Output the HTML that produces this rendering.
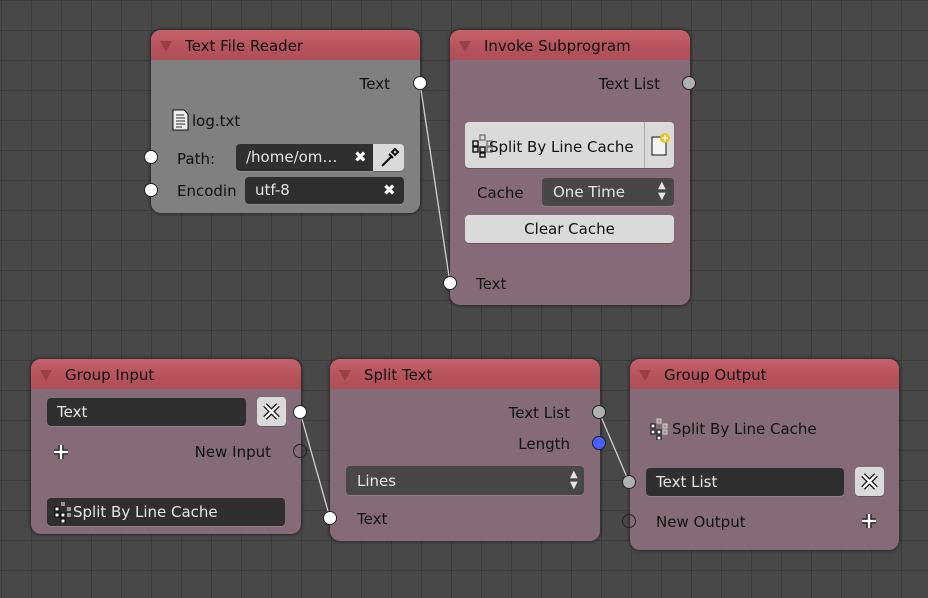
<!DOCTYPE html>
<html><head><meta charset="utf-8"><style>
*{margin:0;padding:0;box-sizing:border-box}
body{width:928px;height:598px;overflow:hidden;position:relative;font-family:"DejaVu Sans","Liberation Sans",sans-serif;font-size:15px;color:#111;
background-color:#484848;
background-image:linear-gradient(to right,#3c3c3c 1px,transparent 1px),linear-gradient(to bottom,#3c3c3c 1px,transparent 1px);
background-size:30px 30px;background-position:1px 0px;}
.node{position:absolute;border-radius:10px;background:#856b77;box-shadow:0 0 3px 1px rgba(0,0,0,.45);}
.hdr{position:absolute;left:0;top:0;right:0;height:30px;border-radius:10px 10px 0 0;background:linear-gradient(#c5616b,#b5525c 60%,#b04f59);}
.hdr .tri{position:absolute;left:9px;top:11px;width:0;height:0;border-left:6px solid transparent;border-right:6px solid transparent;border-top:11px solid #98404a}
.hdr span{position:absolute;left:34px;top:7px;}
.t{position:absolute;white-space:nowrap;line-height:18px}
.rt{position:absolute;white-space:nowrap;line-height:18px;text-align:right}
.sock{position:absolute;width:14px;height:14px;border-radius:50%;background:#fff;border:1px solid #222;transform:translate(-7px,-7px);z-index:5}
.hol{background:transparent;border-color:#222}
.gr{background:#b0b0b0}
.fld{position:absolute;background:#2f2f2f;border-radius:4px;color:#e6e6e6;box-shadow:0 1px 0 rgba(255,255,255,.12)}
.drop{background:#474747}
.btn{position:absolute;background:#dadada;border-radius:4px;color:#111;box-shadow:0 1px 0 rgba(0,0,0,.2)}
.x{position:absolute;color:#fff;font-weight:bold;font-size:15px}
svg.links{position:absolute;left:0;top:0;z-index:4}
</style></head><body>

<svg class="links" width="928" height="598"><g stroke="#cfcfcf" stroke-width="1.3" fill="none">
<line x1="420" y1="83" x2="450" y2="283"/><line x1="300" y1="412" x2="330" y2="518"/><line x1="599" y1="412" x2="629" y2="482"/></g></svg>

<!-- Text File Reader -->
<div class="node" style="left:151px;top:30px;width:269px;height:183px;background:#808080">
<div class="hdr"><div class="tri"></div><span>Text File Reader</span></div>
<div class="rt" style="right:30px;top:45px">Text</div>
<svg style="position:absolute;left:20px;top:79px" width="20" height="22"><path d="M2 1h11l4 4v16H2z" fill="#eee" stroke="#111"/><g stroke="#333"><line x1="5" y1="6" x2="13" y2="6"/><line x1="5" y1="9" x2="14" y2="9"/><line x1="5" y1="12" x2="14" y2="12"/><line x1="5" y1="15" x2="14" y2="15"/><line x1="5" y1="18" x2="11" y2="18"/></g></svg>
<div class="t" style="left:41px;top:82px">log.txt</div>
<div class="t" style="left:26px;top:120px">Path:</div>
<div class="fld" style="left:85px;top:114px;width:138px;height:27px;border-radius:4px 0 0 4px"><div class="t" style="left:10px;top:4px">/home/om…</div><div class="x" style="left:118px;top:4px">✖</div></div>
<div class="btn" style="left:222px;top:114px;width:31px;height:27px;border-radius:0 4px 4px 0"><svg width="31" height="27"><path d="M9 22l9-9M16 10l4 4M19 8l3-3 3 3-3 3z" stroke="#111" stroke-width="2" fill="none"/></svg></div>
<div class="t" style="left:26px;top:152px">Encodin</div>
<div class="fld" style="left:94px;top:147px;width:159px;height:27px"><div class="t" style="left:10px;top:4px">utf-8</div><div class="x" style="left:138px;top:4px">✖</div></div>
</div>
<div class="sock" style="left:420px;top:83px"></div>
<div class="sock" style="left:151px;top:157px"></div>
<div class="sock" style="left:151px;top:190px"></div>

<!-- Invoke Subprogram -->
<div class="node" style="left:450px;top:30px;width:240px;height:275px">
<div class="hdr"><div class="tri"></div><span>Invoke Subprogram</span></div>
<div class="rt" style="right:30px;top:45px">Text List</div>
<div class="btn" style="left:15px;top:92px;width:209px;height:46px">
<svg style="position:absolute;left:7px;top:12px" width="24" height="24"><g fill="none" stroke="#111" stroke-width="1.4"><rect x="1" y="7" width="5" height="5"/><rect x="1" y="13" width="5" height="5"/><rect x="8" y="13" width="5" height="5"/><rect x="8" y="19" width="5" height="4"/></g><g fill="none" stroke="#777" stroke-width="1.4"><rect x="8" y="1" width="5" height="5"/><rect x="15" y="7" width="5" height="5"/><rect x="15" y="13" width="5" height="5"/></g></svg>
<div class="t" style="left:24px;top:16px">Split By Line Cache</div>
<div style="position:absolute;left:179px;top:0;width:1px;height:46px;background:#aaa"></div>
<svg style="position:absolute;left:183px;top:10px" width="24" height="26"><path d="M4 5h10l4 4v14H4z" fill="#f4f4f4" stroke="#111"/><circle cx="17" cy="6" r="5" fill="#f0c020"/><path d="M14 6h6M17 3v6" stroke="#fff" stroke-width="1.5"/></svg>
</div>
<div class="t" style="left:27px;top:154px">Cache</div>
<div class="fld drop" style="left:92px;top:148px;width:132px;height:28px"><div class="t" style="left:11px;top:5px">One Time</div><div class="t" style="left:116px;top:2px;font-size:10px;line-height:11px">▲<br>▼</div></div>
<div class="btn" style="left:15px;top:185px;width:209px;height:28px;text-align:center"><div class="t" style="left:0;right:0;top:5px">Clear Cache</div></div>
<div class="t" style="left:26px;top:245px">Text</div>
</div>
<div class="sock gr" style="left:689px;top:83px"></div>
<div class="sock" style="left:450px;top:283px"></div>

<!-- Group Input -->
<div class="node" style="left:31px;top:359px;width:270px;height:175px">
<div class="hdr"><div class="tri"></div><span>Group Input</span></div>
<div class="fld" style="left:16px;top:39px;width:199px;height:28px"><div class="t" style="left:10px;top:5px">Text</div></div>
<div class="btn" style="left:226px;top:38px;width:29px;height:29px"><svg width="29" height="29"><path d="M8 8l13 13M21 8L8 21" stroke="#111" stroke-width="5"/><path d="M8 8l13 13M21 8L8 21" stroke="#fff" stroke-width="2.5"/></svg></div>
<svg style="position:absolute;left:21px;top:84px" width="18" height="18"><path d="M9 2v14M2 9h14" stroke="#111" stroke-width="5"/><path d="M9 2v14M2 9h14" stroke="#fff" stroke-width="2.5"/></svg>
<div class="rt" style="right:30px;top:84px">New Input</div>
<div class="fld" style="left:16px;top:139px;width:238px;height:28px">
<svg style="position:absolute;left:6px;top:3px" width="20" height="22"><g fill="#fff" stroke="#000"><rect x="2" y="6" width="4" height="4"/><rect x="2" y="12" width="4" height="4"/><rect x="8" y="12" width="4" height="4"/><rect x="8" y="18" width="4" height="4"/></g><g fill="#999"><rect x="8" y="1" width="4" height="4"/><rect x="14" y="6" width="4" height="4"/><rect x="14" y="12" width="4" height="4"/></g></svg>
<div class="t" style="left:26px;top:5px">Split By Line Cache</div></div>
</div>
<div class="sock" style="left:300px;top:412px"></div>
<div class="sock hol" style="left:300px;top:451px"></div>

<!-- Split Text -->
<div class="node" style="left:330px;top:359px;width:270px;height:182px">
<div class="hdr"><div class="tri"></div><span>Split Text</span></div>
<div class="rt" style="right:30px;top:45px">Text List</div>
<div class="rt" style="right:30px;top:76px">Length</div>
<div class="fld drop" style="left:16px;top:107px;width:238px;height:29px"><div class="t" style="left:11px;top:6px">Lines</div><div class="t" style="left:224px;top:3px;font-size:10px;line-height:11px">▲<br>▼</div></div>
<div class="t" style="left:27px;top:151px">Text</div>
</div>
<div class="sock gr" style="left:599px;top:412px"></div>
<div class="sock" style="left:599px;top:443px;background:#4a5eff"></div>
<div class="sock" style="left:330px;top:518px"></div>

<!-- Group Output -->
<div class="node" style="left:630px;top:359px;width:269px;height:191px">
<div class="hdr"><div class="tri"></div><span>Group Output</span></div>
<svg style="position:absolute;left:19px;top:59px" width="20" height="22"><g fill="#fff" stroke="#000"><rect x="2" y="6" width="4" height="4"/><rect x="2" y="12" width="4" height="4"/><rect x="8" y="12" width="4" height="4"/><rect x="8" y="18" width="4" height="4"/></g><g fill="#999" stroke="#ccc"><rect x="8" y="1" width="4" height="4"/><rect x="14" y="6" width="4" height="4"/><rect x="14" y="12" width="4" height="4"/></g></svg>
<div class="t" style="left:42px;top:61px">Split By Line Cache</div>
<div class="fld" style="left:16px;top:109px;width:198px;height:28px"><div class="t" style="left:10px;top:5px">Text List</div></div>
<div class="btn" style="left:225px;top:108px;width:29px;height:29px"><svg width="29" height="29"><path d="M8 8l13 13M21 8L8 21" stroke="#111" stroke-width="5"/><path d="M8 8l13 13M21 8L8 21" stroke="#fff" stroke-width="2.5"/></svg></div>
<div class="t" style="left:26px;top:154px">New Output</div>
<svg style="position:absolute;left:230px;top:153px" width="18" height="18"><path d="M9 2v14M2 9h14" stroke="#111" stroke-width="5"/><path d="M9 2v14M2 9h14" stroke="#fff" stroke-width="2.5"/></svg>
</div>
<div class="sock gr" style="left:629px;top:482px"></div>
<div class="sock hol" style="left:629px;top:521px"></div>

</body></html>
